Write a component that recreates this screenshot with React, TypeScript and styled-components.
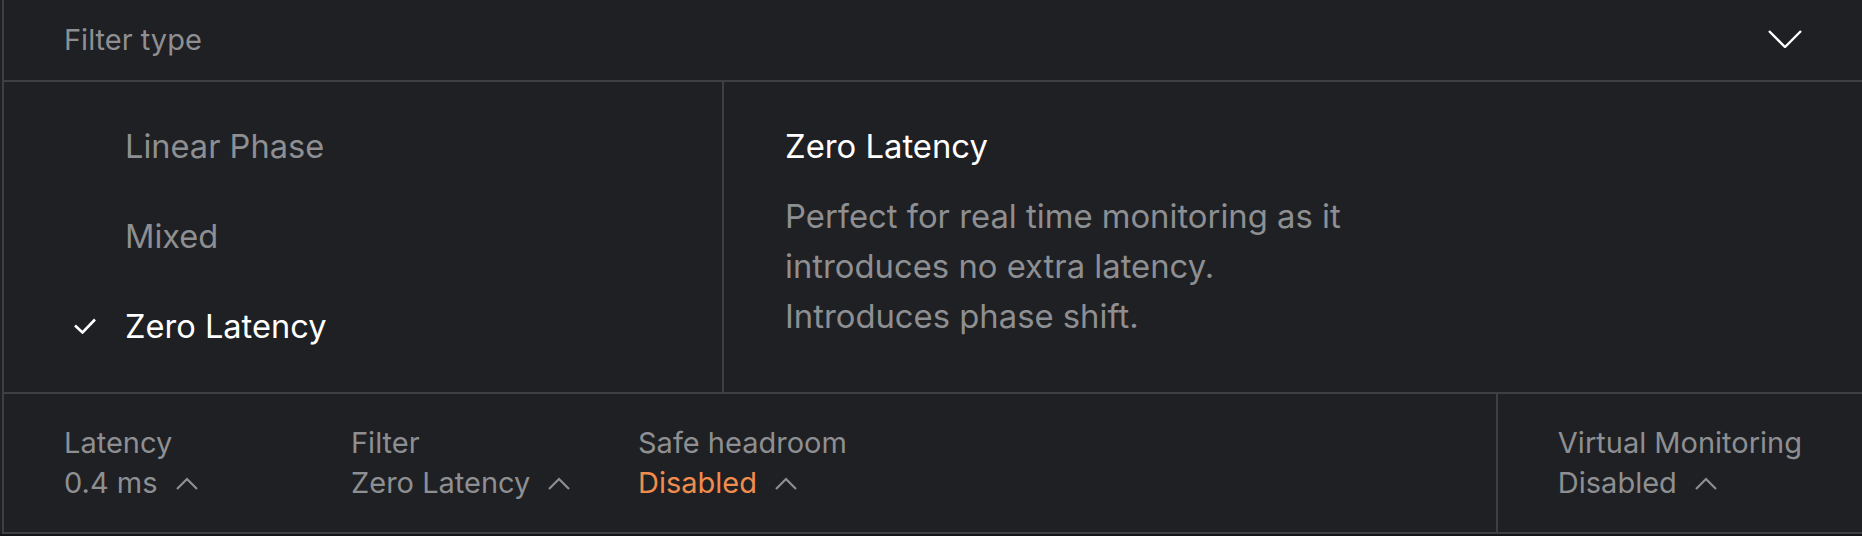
import React from 'react';
import styled, { createGlobalStyle } from 'styled-components';

const GlobalStyle = createGlobalStyle`
  html, body {
    margin: 0;
    padding: 0;
    background: #141416;
  }
  body {
    font-family: Inter, "Noto Sans", sans-serif;
    -webkit-font-smoothing: antialiased;
  }
`;

const Page = styled.div`
  padding-left: 2px;
  background: #1f2023;
`;

const Panel = styled.div`
  background: #1f2023;
  border-left: 2px solid #3e3f42;
  border-bottom: 2px solid #3e3f42;
  display: flex;
  flex-direction: column;
`;

const Header = styled.div`
  height: 78px;
  padding: 0 60px 2px;
  display: flex;
  align-items: center;
  justify-content: space-between;
  border-bottom: 2px solid #3e3f42;
`;

const HeaderTitle = styled.span`
  font-size: 29px;
  color: #8e8f92;
`;

const Body = styled.div`
  display: flex;
  height: 310px;
  border-bottom: 2px solid #3e3f42;
`;

const OptionList = styled.div`
  width: 720px;
  border-right: 2px solid #3e3f42;
  padding: 19px 0 0 70px;
  box-sizing: border-box;
`;

const Option = styled.div<{ selected?: boolean }>`
  height: 90px;
  display: flex;
  align-items: center;
  font-size: 32.6px;
  color: ${({ selected }) => (selected ? '#ffffff' : '#8e8f92')};
`;

const CheckSlot = styled.span`
  width: 51px;
  display: flex;
  align-items: center;
`;

const Details = styled.div`
  flex: 1;
  padding: 19px 0 0 61px;
`;

const DetailsTitle = styled.div`
  height: 90px;
  display: flex;
  align-items: center;
  font-size: 32.8px;
  color: #ffffff;
`;

const DetailsText = styled.p`
  margin: 0;
  font-size: 32.8px;
  line-height: 50px;
  color: #8e8f92;
`;

const StatusBar = styled.div`
  display: flex;
  height: 138px;
`;

const StatusMain = styled.div`
  flex: 1;
  display: flex;
  align-items: center;
  padding-left: 60px;
  border-right: 2px solid #3e3f42;
`;

const StatusSide = styled.div`
  display: flex;
  align-items: center;
  padding: 0 60px;
`;

const Stat = styled.div<{ wide?: boolean }>`
  width: ${({ wide }) => (wide ? 'auto' : '287px')};
  display: flex;
  flex-direction: column;
  font-size: 29px;
  line-height: 40px;
  color: #8e8f92;
`;

const StatValue = styled.div<{ warn?: boolean }>`
  display: flex;
  align-items: center;
  gap: 18px;
  color: ${({ warn }) => (warn ? '#f08c4e' : '#8e8f92')};
`;

const ChevronDown = () => (
  <svg width="34" height="18" viewBox="0 0 34 18" fill="none">
    <path d="M1 1L17 17L33 1" stroke="#ffffff" strokeWidth="2.4" />
  </svg>
);

const ChevronUp = () => (
  <svg width="22" height="13" viewBox="0 0 22 13" fill="none">
    <path d="M1 12L11 2L21 12" stroke="#8e8f92" strokeWidth="2.2" />
  </svg>
);

const Check = () => (
  <svg width="22" height="16" viewBox="0 0 22 16" fill="none">
    <path d="M1 7.5L8.5 14.5L21 1.5" stroke="#ffffff" strokeWidth="2.6" />
  </svg>
);

const options = ['Linear Phase', 'Mixed', 'Zero Latency'];
const selected = 'Zero Latency';

const stats = [
  { label: 'Latency', value: '0.4 ms' },
  { label: 'Filter', value: 'Zero Latency' },
  { label: 'Safe headroom', value: 'Disabled', warn: true },
];

export default function App() {
  return (
    <>
      <GlobalStyle />
      <Page>
        <Panel>
          <Header>
            <HeaderTitle>Filter type</HeaderTitle>
            <ChevronDown />
          </Header>
          <Body>
            <OptionList>
              {options.map((o) => (
                <Option key={o} selected={o === selected}>
                  <CheckSlot>{o === selected && <Check />}</CheckSlot>
                  {o}
                </Option>
              ))}
            </OptionList>
            <Details>
              <DetailsTitle>Zero Latency</DetailsTitle>
              <DetailsText>
                Perfect for real time monitoring as it
                <br />
                introduces no extra latency.
                <br />
                Introduces phase shift.
              </DetailsText>
            </Details>
          </Body>
          <StatusBar>
            <StatusMain>
              {stats.map((s) => (
                <Stat key={s.label}>
                  <span>{s.label}</span>
                  <StatValue warn={s.warn}>
                    {s.value}
                    <ChevronUp />
                  </StatValue>
                </Stat>
              ))}
            </StatusMain>
            <StatusSide>
              <Stat wide>
                <span>Virtual Monitoring</span>
                <StatValue>
                  Disabled
                  <ChevronUp />
                </StatValue>
              </Stat>
            </StatusSide>
          </StatusBar>
        </Panel>
      </Page>
    </>
  );
}
